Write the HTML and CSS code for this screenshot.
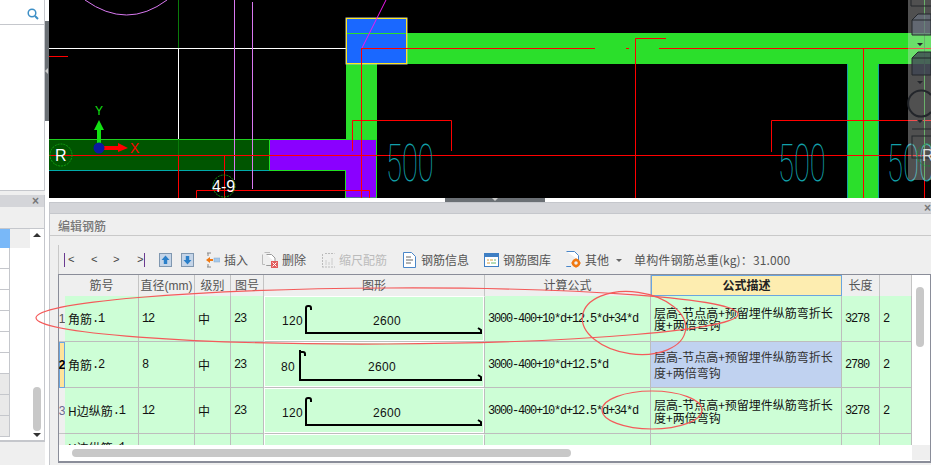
FILE: index.html
```html
<!DOCTYPE html>
<html lang="zh">
<head>
<meta charset="utf-8">
<title>编辑钢筋</title>
<link rel="stylesheet" href="styles.css">
</head>
<body>
<div class="app">
  <aside class="side">
    <div class="search">
      <svg width="12" height="12" viewBox="0 0 12 12"><circle cx="5" cy="5" r="3.8" fill="none" stroke="#3d8fc6" stroke-width="1.5"/><path d="M8 8l3 3" stroke="#3d8fc6" stroke-width="2"/></svg>
    </div>
    <div class="side-blank"></div>
    <div class="side-gap"></div>
    <div class="side-panel">
      <div class="side-head"><span class="close">×</span></div>
      <div class="side-title"></div>
      <div class="side-body">
        <div class="list">
          <div class="list-top"><span class="list-sel"></span></div>
          <div class="list-row"></div><div class="list-row"></div><div class="list-row"></div>
          <div class="list-row"></div><div class="list-row"></div><div class="list-row"></div>
          <div class="list-row is-grey"></div><div class="list-row is-grey"></div><div class="list-row is-grey"></div>
        </div>
        <div class="side-scroll">
          <span class="arr-up"></span>
          <span class="side-thumb"></span>
          <span class="arr-down"></span>
        </div>
      </div>
    </div>
  </aside>
  <div class="split"><div class="split-handle"><span class="split-tri"></span></div></div>
  <main class="main">
    <svg class="canvas" viewBox="49 0 882 198" width="882" height="198">
      <rect x="49" y="0" width="882" height="198" fill="#000"/>
      <path d="M85 0Q127 30 167 0" fill="none" stroke="#d878f0"/>
      <path d="M178.500 0V48" stroke="#0a7a0a"/>
      <path d="M178.500 48V139M49 48.500H346" stroke="#fff"/>
      <path d="M407 33H931V64H407zM346 64H377V198H346zM848 64H878V198H848z" fill="#2bdf2b"/>
      <path d="M847.500 64V198M878.500 64V198" stroke="#14a0a0"/>
      <rect x="49" y="139.500" width="220" height="31" fill="#005500"/>
      <path d="M49 139.500H269" stroke="#1fd01f"/>
      <path d="M49 170.500H346" stroke="#0aa"/>
      <path d="M178.500 139V170" stroke="#0a7a0a"/>
      <path d="M269.500 139.500H376.500V198H345.500V170.500H269.500z" fill="#8a00ff" stroke="#22e022"/>
      <path d="M234.500 0V180M252.500 2V189" stroke="#d878f0"/>
      <rect x="346" y="18" width="61" height="46" fill="#1a68ff" stroke="#b8c0c8"/>
      <rect x="346.500" y="18.500" width="60" height="45" fill="none" stroke="#ffe820"/>
      <path d="M347 33.500H406" stroke="#2bdf2b"/>
      <path d="M362 48L386 0" stroke="#f018f0"/>
      <g stroke="#f00" fill="none">
        <path d="M49 56.500H68"/>
        <path d="M361 48.500H595M626 48.500H629M659 48.500H931"/>
        <path d="M361.500 48V198"/>
        <path d="M635.500 198V38.500H666"/>
        <path d="M863.500 48V198"/>
        <path d="M49 155.500H931"/>
        <path d="M352.500 151V120.500H451.500V151"/>
        <path d="M771.500 152V120.500H931"/>
        <path d="M178.500 155V198M224.500 155V198"/>
        <path d="M196.500 198V190.500H369.500V198"/>
        <path d="M924.500 180V198"/>
      </g>
      <g class="dim">
        <text transform="translate(386 181) scale(.56 1)">500</text>
        <text transform="translate(778 181) scale(.56 1)">500</text>
        <text transform="translate(887 181) scale(.56 1)">500</text>
      </g>
      <circle cx="61" cy="155" r="11" fill="none" stroke="#12a012" stroke-dasharray="2 1"/>
      <text class="lbl" x="55" y="161">R</text>
      <circle cx="224" cy="186" r="11" fill="none" stroke="#12a012" stroke-dasharray="2 1"/>
      <text class="lbl" x="212" y="192">4-9</text>
      <path d="M97 148V130H94L99 120L104 130H101V148z" fill="#12e012"/>
      <path d="M104 146H118V143L128 148L118 152V150H104z" fill="#f00"/>
      <circle cx="99" cy="148" r="5.500" fill="#0a1aa0"/>
      <text class="axis-y" x="95" y="115">Y</text>
      <text class="axis-x" x="130" y="153">X</text>
      <rect x="908" y="-4" width="30" height="184" rx="3" fill="#ddd" fill-opacity=".36"/>
      <path d="M924.500 0V180" stroke="#6ab06a"/>
      <g stroke="#23262b">
        <path d="M911 0V6H931" fill="none"/>
        <path d="M912 35V20L918 14H931V35z" fill="#6a7280" fill-opacity=".7"/>
        <path d="M912 20H931" fill="none"/>
        <path d="M912 75V58L918 52H931V75z" fill="#3e4552" fill-opacity=".8"/>
        <path d="M912 58H931" fill="none"/>
      </g>
      <path d="M931 95A13 13 0 1 0 931 112" fill="none" stroke="#23262b" stroke-width="2"/>
      <path d="M912 129H931" stroke="#23262b"/>
      <rect x="912" y="136" width="24" height="22" fill="none" stroke="#23262b"/>
      <path d="M917 43H923L920 46zM917 81H923L920 84zM917 120H923L920 123z" fill="#23262b"/>
      <circle cx="928" cy="155" r="11" fill="none" stroke="#1a8a3a" stroke-dasharray="2 1"/>
      <text class="lbl lbl-over" x="922" y="161">R</text>
    </svg>
    <div class="strip"><div class="strip-handle"><span class="strip-tri"></span></div></div>
    <section class="panel">
      <div class="panel-head"><span class="close">×</span></div>
      <h1 class="panel-title">编辑钢筋</h1>
      <div class="toolbar">
        <div class="nav">
          <span class="nav-btn nav-first">&lt;</span>
          <span class="nav-btn">&lt;</span>
          <span class="nav-btn">&gt;</span>
          <span class="nav-btn nav-last">&gt;</span>
        </div>
        <div class="updown">
          <svg width="13" height="14" viewBox="0 0 13 14"><rect x=".5" y=".5" width="12" height="13" fill="#c5d5e8" stroke="#7f97b0"/><path d="M6.500 2.500L10.500 7H8.200V11H4.800V7H2.500z" fill="#2a7fc9"/></svg>
          <svg width="13" height="14" viewBox="0 0 13 14"><rect x=".5" y=".5" width="12" height="13" fill="#c5d5e8" stroke="#7f97b0"/><path d="M6.500 11.500L10.500 7H8.200V3H4.800V7H2.500z" fill="#2a7fc9"/></svg>
        </div>
        <div class="tools">
          <div class="tool">
            <svg width="14" height="16" viewBox="0 0 14 16"><path d="M1 1H5M1 15H5M2 1V4M2 12V15" stroke="#888" fill="none"/><path d="M0 8L4 5V7H7V9H4V11z" fill="#f07810"/><rect x="8" y="6" width="6" height="4" fill="#a9c9e8" stroke="#7fa8d0" stroke-width=".5"/></svg>
            <span>插入</span>
          </div>
          <div class="tool tool-del">
            <svg width="16" height="16" viewBox="0 0 16 16"><path d="M4.500 2.500H9.500L13 6V10M9 13.500H4.500z" fill="#fff" stroke="#999"/><path d="M2.500 .5H8M.5 2.500V12.500H3" fill="none" stroke="#bbb"/><rect x="9" y="9" width="7" height="7" fill="#e25c5c"/><path d="M10.500 10.500L14.500 14.500M14.500 10.500L10.500 14.500" stroke="#fff"/></svg>
            <span>删除</span>
          </div>
          <div class="tool is-off">
            <svg width="14" height="16" viewBox="0 0 14 16"><path d="M1.500 2V15M1 15H14M4 1.500H13.500" stroke="#bbb" stroke-dasharray="2 1" fill="none"/><path d="M5 13V8M8 13V10M11 13V6" stroke="#ccc" fill="none"/></svg>
            <span>缩尺配筋</span>
          </div>
          <div class="tool">
            <svg width="15" height="16" viewBox="0 0 15 16"><path d="M1.500 .5H9.500L13.500 4.500V15.500H1.500z" fill="#fff" stroke="#4a86c8"/><path d="M4 5H9M4 8H11M4 11H9" stroke="#666"/></svg>
            <span>钢筋信息</span>
          </div>
          <div class="tool">
            <svg width="15" height="14" viewBox="0 0 15 14"><rect x=".5" y=".5" width="14" height="13" fill="#fff" stroke="#3f7fc4"/><rect x="1" y="1" width="13" height="3" fill="#3f7fc4"/><path d="M3 7H5M6 7H9M3 10H6" stroke="#d8a040"/><path d="M10 7H12M7 10H12" stroke="#6fb86f"/></svg>
            <span>钢筋图库</span>
          </div>
          <div class="tool">
            <svg width="15" height="17" viewBox="0 0 15 17"><path d="M.5 .5H8.500L12.500 4.500V9M5 15.500H.5z" fill="#fff" stroke="#4a86c8"/><circle cx="10" cy="12" r="3" fill="none" stroke="#f07810" stroke-width="2.500"/><path d="M10 7.500V9M10 15V16.500M5.500 12H7M13 12H14.500" stroke="#f07810" stroke-width="1.500"/></svg>
            <span>其他</span>
          </div>
          <span class="caret"></span>
          <span class="total">单构件钢筋总重(kg)：31.000</span>
        </div>
      </div>
      <div class="frame">
        <div class="grid-wrap">
          <div class="grid-main">
            <div class="grid-row grid-head">
              <div></div>
              <div class="hc">筋号</div>
              <div class="hc hc-tight">直径(mm)</div>
              <div class="hc">级别</div>
              <div class="hc">图号</div>
              <div class="hc">图形</div>
              <div class="hc">计算公式</div>
              <div class="hc hc-active">公式描述</div>
              <div class="hc">长度</div>
              <div class="hc"></div>
            </div>
            <div class="grid-body">
              <div class="grid-row">
                <div class="rn">1</div>
                <div class="c"><span class="zh">角筋</span>.1</div>
                <div class="c">12</div>
                <div class="c"><span class="zh">中</span></div>
                <div class="c">23</div>
                <div class="c c-shape">
                  <svg class="shape" width="219" height="44" viewBox="265 297 219 44">
                    <path d="M311 310V308Q311 306 309 306H308Q306 306 306 308V333H481V330L478 328" fill="none" stroke="#000" stroke-width="2"/>
                    <text x="282" y="325">120</text><text x="373" y="325">2600</text>
                  </svg>
                </div>
                <div class="c">3000-400+10*d+12.5*d+34*d</div>
                <div class="c c-desc is-tight">层高-节点高+预留埋件纵筋弯折长度+两倍弯钩</div>
                <div class="c">3278</div>
                <div class="c">2</div>
              </div>
              <div class="grid-row">
                <div class="rn rn-sel">2</div>
                <div class="c"><span class="zh">角筋</span>.2</div>
                <div class="c">8</div>
                <div class="c"><span class="zh">中</span></div>
                <div class="c">23</div>
                <div class="c c-shape">
                  <svg class="shape" width="219" height="44" viewBox="265 343 219 44">
                    <path d="M305 356V354Q305 352 303 352H301M300 350V380H481V377L478 375" fill="none" stroke="#000" stroke-width="2"/>
                    <text x="281" y="371">80</text><text x="368" y="371">2600</text>
                  </svg>
                </div>
                <div class="c">3000-400+10*d+12.5*d</div>
                <div class="c c-desc is-sel">层高-节点高+预留埋件纵筋弯折长度+两倍弯钩</div>
                <div class="c">2780</div>
                <div class="c">2</div>
              </div>
              <div class="grid-row">
                <div class="rn rn-dim">3</div>
                <div class="c"><span class="zh">H边纵筋</span>.1</div>
                <div class="c">12</div>
                <div class="c"><span class="zh">中</span></div>
                <div class="c">23</div>
                <div class="c c-shape">
                  <svg class="shape" width="219" height="44" viewBox="265 389 219 44">
                    <path d="M311 402V400Q311 398 309 398H308Q306 398 306 400V425H481V422L478 420" fill="none" stroke="#000" stroke-width="2"/>
                    <text x="282" y="417">120</text><text x="373" y="417">2600</text>
                  </svg>
                </div>
                <div class="c">3000-400+10*d+12.5*d+34*d</div>
                <div class="c c-desc is-mid">层高-节点高+预留埋件纵筋弯折长度+两倍弯钩</div>
                <div class="c">3278</div>
                <div class="c">2</div>
              </div>
              <div class="grid-row">
                <div class="rn"></div>
                <div class="c c-cut"><span class="zh">H边纵筋</span>.1</div>
                <div class="c"></div><div class="c"></div><div class="c"></div>
                <div class="c c-shape"></div>
                <div class="c"></div><div class="c"></div><div class="c"></div><div class="c"></div>
              </div>
            </div>
          </div>
          <div class="vscroll"><span class="vthumb"></span></div>
        </div>
        <div class="hscroll">
          <div class="htrack"><span class="hthumb"></span></div>
          <div class="hcorner"></div>
        </div>
      </div>
    </section>
  </main>
  <svg class="marks" width="931" height="465" viewBox="0 0 931 465">
    <ellipse cx="387" cy="316" rx="351" ry="28" transform="rotate(-.3 387 316)"/>
    <ellipse cx="634" cy="323" rx="52" ry="31" transform="rotate(8 634 323)"/>
    <ellipse cx="652" cy="410" rx="50" ry="19"/>
  </svg>
</div>
</body>
</html>
```
FILE: styles.css
```css
* { box-sizing: border-box; }
html, body { margin: 0; padding: 0; }
body { width: 931px; height: 465px; overflow: hidden; background: #efefef; font-family: "Noto Sans CJK SC", sans-serif; }
.app { position: relative; display: flex; width: 931px; height: 465px; overflow: hidden; }

.side { width: 45px; display: flex; flex-direction: column; background: #efefef; }
.search { height: 25px; background: #fff; border-bottom: 1px solid #c5c7cc; border-right: 1px solid #c5c7cc; display: flex; justify-content: flex-end; align-items: flex-end; padding: 0 5px 4px 0; }
.side-blank { height: 166px; background: #fff; border-right: 1px solid #c5c7cc; border-bottom: 1px solid #c5c7cc; }
.side-gap { height: 4px; background: #efefef; }
.side-panel { height: 247px; display: flex; flex-direction: column; background: #fff; border-right: 1px solid #c5c7cc; border-bottom: 2px solid #c5c7cc; }
.side-head { height: 12px; background: #d4d5d9; display: flex; justify-content: flex-end; align-items: center; padding-right: 5px; }
.side-title { height: 22px; background: #efefef; border-bottom: 1px solid #c5c7cc; }
.close { font: bold 12px/10px "Liberation Sans", sans-serif; color: #777; }
.side-body { flex: 1; display: flex; background: #fff; }
.list { width: 30px; }
.list-top { height: 19px; background: #efefef; }
.list-sel { display: block; width: 10px; height: 19px; background: #79b8f8; }
.list-row { width: 10px; height: 21px; background: #fff; border-right: 1px solid #c5c7cc; border-bottom: 1px solid #c5c7cc; }
.is-grey { background: #e9e9e9; }
.side-scroll { width: 8px; margin-left: 3px; padding: 4px 0 3px; display: flex; flex-direction: column; align-items: center; }
.arr-up, .arr-down { width: 0; height: 0; border-left: 4px solid transparent; border-right: 4px solid transparent; }
.arr-up { border-bottom: 4px solid #333; }
.arr-down { border-top: 4px solid #333; }
.side-thumb { width: 8px; height: 44px; margin: auto 0 2px; background: #c8c8c8; border-radius: 4px; }

.split { width: 4px; background: #fff; }
.split-handle { position: relative; width: 4px; height: 100px; margin-top: 21px; background: #6b7075; }
.split-tri { position: absolute; top: 47px; left: 0; width: 0; height: 0; border-top: 3px solid transparent; border-bottom: 3px solid transparent; border-right: 3px solid #ccc; }

.main { width: 882px; display: flex; flex-direction: column; }
.canvas { display: block; flex: none; }
.canvas text { font-family: "Liberation Sans", sans-serif; }
.canvas .dim text { font-family: Roboto, "Liberation Sans", sans-serif; font-weight: 100; font-size: 52px; fill: #12a0aa; }
.canvas .lbl { font-size: 16px; fill: #fff; }
.canvas .lbl-over { fill: #ddd; }
.canvas .axis-y { font-size: 12px; fill: #12e012; }
.canvas .axis-x { font-size: 14px; fill: #f00; }
.strip { height: 4px; flex: none; background: #fff; }
.strip-handle { position: relative; width: 100px; height: 4px; margin-left: 396px; background: #6b7075; }
.strip-tri { position: absolute; left: 47px; top: 0; width: 0; height: 0; border-left: 3px solid transparent; border-right: 3px solid transparent; border-top: 3px solid #ccc; }

.panel { flex: 1; display: flex; flex-direction: column; background: #efefef; border-left: 1px solid #c5c7cc; }
.panel-head { height: 11px; flex: none; background: #d4d5d9; border-top: 1px solid #c5c7cc; display: flex; justify-content: flex-end; align-items: center; }
.panel-title { height: 23px; flex: none; margin: 0; padding-left: 8px; font-size: 12px; font-weight: 500; line-height: 23px; color: #777; border-top: 1px solid #c5c7cc; border-bottom: 1px solid #c9c9c9; }

.toolbar { height: 29px; flex: none; margin: 9px 0 0 8px; padding-left: 5px; border-left: 1px solid #c8c8c8; display: flex; align-items: center; }
.nav { display: flex; width: 83px; font: 11px/14px "Liberation Mono", monospace; color: #444; }
.nav-btn { width: 22px; height: 14px; }
.nav-first { width: 27px; padding-left: 3px; border-left: 1px solid #6a3a90; }
.nav-last { width: 10px; padding-left: 2px; border-right: 1px solid #6a3a90; }
.updown { display: flex; gap: 9px; margin-left: 12px; }
.tools { display: flex; align-items: center; gap: 15px; margin-left: 12px; }
.tool { display: flex; align-items: center; gap: 4px; font-size: 12px; line-height: 16px; color: #555; }
.tool svg { flex: none; }
.tool-del { margin-left: -1px; }
.is-off { color: #bbb; }
.caret { width: 0; height: 0; margin: 1px 0 0 -8px; border-left: 3px solid transparent; border-right: 3px solid transparent; border-top: 3px solid #666; }
.total { margin-left: -3px; font: 12px/16px "Noto Sans CJK SC", sans-serif; letter-spacing: .12px; color: #555; white-space: nowrap; }

.frame { width: 873px; height: 189px; flex: none; margin-left: 8px; display: flex; flex-direction: column; background: #fff; border: 1px solid #8a8d99; border-bottom-width: 2px; }
.grid-wrap { height: 170px; display: flex; flex: none; }
.grid-main { width: 853px; display: flex; flex-direction: column; flex: none; }
.grid-row { display: grid; grid-template-columns: 6px 74px 56px 36px 33px 221px 166px 191px 38px 32px; height: 46px; flex: none; }
.grid-head { height: 21px; background: #efefef; }
.hc { display: flex; justify-content: center; align-items: center; font-size: 12px; color: #555; border-right: 1px solid #c4c4c4; border-bottom: 1px solid #c4c4c4; padding-bottom: 2px; }
.hc-tight { white-space: nowrap; font-family: "Liberation Sans", "Noto Sans CJK SC", sans-serif; font-size: 12px; }
.hc-active { font-weight: 700; color: #222; background: #fdedb0; border: 1px solid #6aa5e0; border-bottom-width: 2px; }
.grid-body { height: 149px; overflow: hidden; }
.rn { display: flex; align-items: center; justify-content: center; background: #efefef; border-bottom: 1px solid #c4c4c4; font: 12px "Liberation Sans", sans-serif; color: #555; }
.rn-sel { font-weight: 700; color: #000; background: #ffe39a; border: 1px solid #6aa5e0; }
.rn-dim { color: #6a6a90; }
.c { display: flex; align-items: center; padding-left: 3px; background: #cdfed6; border-right: 1px solid #bdbdbd; border-bottom: 1px solid #bdbdbd; font: 12px/12px "Liberation Mono", "Noto Sans CJK SC", monospace; letter-spacing: -1.2px; color: #111; white-space: nowrap; }
.zh { font: 12px/12px "Noto Sans CJK SC", sans-serif; letter-spacing: 0; }
.c-shape { padding: 0; border-top: 1px solid #fff; border-left: 1px solid #fff; box-shadow: inset 0 -1px 0 #fff, inset -1px 0 0 #fff; }
.shape { display: block; }
.shape text { font: 12px "Liberation Sans", sans-serif; letter-spacing: .3px; fill: #111; }
.c-desc { padding: 0 3px; white-space: normal; font: 12px/12px "Noto Sans CJK SC", sans-serif; letter-spacing: 0; word-break: break-all; }
.is-mid { line-height: 13px; }
.is-sel { background: #c0d2f0; line-height: 16px; color: #333; }
.c-cut { align-items: flex-start; padding-top: 8px; }

.vscroll { width: 18px; padding: 12px 0 0 4px; background: #fff; flex: none; }
.vthumb { display: block; width: 8px; height: 60px; background: #c8c8c8; border-radius: 4px; }
.hscroll { height: 15px; display: flex; flex: none; }
.htrack { width: 853px; padding: 4px 0 0 13px; background: #fff; }
.hthumb { display: block; width: 499px; height: 8px; background: #c8c8c8; border-radius: 4px; }
.hcorner { width: 18px; background: #efefef; }

.marks { position: absolute; left: 0; top: 0; pointer-events: none; }
.marks ellipse { fill: none; stroke: #f45a5a; stroke-width: 1.2; }
```
